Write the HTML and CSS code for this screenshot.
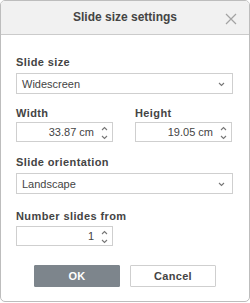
FILE: index.html
```html
<!DOCTYPE html>
<html>
<head>
<meta charset="utf-8">
<link rel="stylesheet" href="styles.css">
</head>
<body>
<div class="dialog">
  <div class="header">
    <span class="title">Slide size settings</span>
    <svg class="close" width="12" height="12" viewBox="0 0 12 12"><path d="M1 1 L11 11 M11 1 L1 11" stroke="#a3a3a3" stroke-width="1.2" fill="none"/></svg>
  </div>
  <div class="body">
    <div class="label l1">Slide size</div>
    <div class="select">
      <span>Widescreen</span>
      <svg class="chev" width="7" height="5" viewBox="0 0 7 5"><path d="M1 1 L3.5 3.5 L6 1" stroke="#777" stroke-width="1.1" fill="none"/></svg>
    </div>
    <div class="pair">
      <div class="col">
        <div class="label l2">Width</div>
        <div class="spin">
          <span class="val">33.87 cm</span>
          <div class="arrows">
            <svg width="7" height="5" viewBox="0 0 7 5"><path d="M1 4 L3.5 1.5 L6 4" stroke="#777" stroke-width="1.1" fill="none"/></svg>
            <svg width="7" height="5" viewBox="0 0 7 5"><path d="M1 1 L3.5 3.5 L6 1" stroke="#777" stroke-width="1.1" fill="none"/></svg>
          </div>
        </div>
      </div>
      <div class="col">
        <div class="label l2">Height</div>
        <div class="spin">
          <span class="val">19.05 cm</span>
          <div class="arrows">
            <svg width="7" height="5" viewBox="0 0 7 5"><path d="M1 4 L3.5 1.5 L6 4" stroke="#777" stroke-width="1.1" fill="none"/></svg>
            <svg width="7" height="5" viewBox="0 0 7 5"><path d="M1 1 L3.5 3.5 L6 1" stroke="#777" stroke-width="1.1" fill="none"/></svg>
          </div>
        </div>
      </div>
    </div>
    <div class="label l3">Slide orientation</div>
    <div class="select">
      <span>Landscape</span>
      <svg class="chev" width="7" height="5" viewBox="0 0 7 5"><path d="M1 1 L3.5 3.5 L6 1" stroke="#777" stroke-width="1.1" fill="none"/></svg>
    </div>
    <div class="label l4">Number slides from</div>
    <div class="spin single">
      <span class="val">1</span>
      <div class="arrows">
        <svg width="7" height="5" viewBox="0 0 7 5"><path d="M1 4 L3.5 1.5 L6 4" stroke="#777" stroke-width="1.1" fill="none"/></svg>
        <svg width="7" height="5" viewBox="0 0 7 5"><path d="M1 1 L3.5 3.5 L6 1" stroke="#777" stroke-width="1.1" fill="none"/></svg>
      </div>
    </div>
  </div>
  <div class="footer">
    <button class="btn ok">OK</button>
    <button class="btn cancel">Cancel</button>
  </div>
</div>
</body>
</html>
```
FILE: styles.css
```css
html, body {
  margin: 0;
  padding: 0;
  background: #ffffff;
}
body {
  font-family: "Liberation Sans", Arial, sans-serif;
  color: #444444;
  width: 250px;
  height: 303px;
}
.dialog {
  box-sizing: border-box;
  width: 250px;
  height: 302px;
  border: 1px solid #bdbdbd;
  border-radius: 5px;
  overflow: hidden;
  display: flex;
  flex-direction: column;
  background: #ffffff;
}
.header {
  position: relative;
  height: 33px;
  background: #f1f1f1;
  border-bottom: 1px solid #cbcbcb;
  display: flex;
  align-items: center;
  justify-content: center;
}
.title {
  font-size: 12px;
  font-weight: bold;
  color: #444444;
  margin-top: -1px;
}
.close {
  position: absolute;
  left: 224px;
  top: 12px;
}
.body {
  padding: 20px 16px 0 15px;
  display: flex;
  flex-direction: column;
}
.label {
  font-size: 11px;
  font-weight: bold;
  line-height: 14px;
  height: 14px;
  color: #444444;
  letter-spacing: 0.4px;
}
.l1 { margin-bottom: 4px; }
.l2 { margin-bottom: 2px; }
.l3 { margin-top: 13px; margin-bottom: 4px; }
.l4 { margin-top: 15px; margin-bottom: 3px; }
.pair {
  margin-top: 12px;
  display: grid;
  grid-template-columns: 97px 97px;
  column-gap: 22px;
}
.select {
  box-sizing: border-box;
  height: 21px;
  width: 217px;
  border: 1px solid #cfcfcf;
  display: flex;
  align-items: center;
  justify-content: space-between;
  padding: 0 7px 0 5px;
  font-size: 11px;
}
.chev {
  margin-top: 1px;
}
.spin {
  box-sizing: border-box;
  height: 20px;
  width: 97px;
  border: 1px solid #cfcfcf;
  display: flex;
  align-items: center;
  justify-content: flex-end;
  padding-right: 4px;
  font-size: 11px;
}
.val {
  margin-right: 7px;
}
.arrows {
  display: flex;
  flex-direction: column;
  gap: 4px;
  width: 7px;
  margin-top: 1px;
}
.arrows svg {
  display: block;
}
.footer {
  margin-top: 19px;
  display: flex;
  justify-content: center;
  gap: 10px;
}
.btn {
  box-sizing: border-box;
  width: 86px;
  height: 22px;
  font-family: "Liberation Sans", Arial, sans-serif;
  font-size: 11px;
  font-weight: bold;
  padding: 0;
  border-radius: 1px;
  letter-spacing: 0.3px;
}
.ok {
  background: #7d858c;
  border: 1px solid #7d858c;
  color: #ffffff;
}
.cancel {
  background: #ffffff;
  border: 1px solid #cfcfcf;
  color: #444444;
}
```
